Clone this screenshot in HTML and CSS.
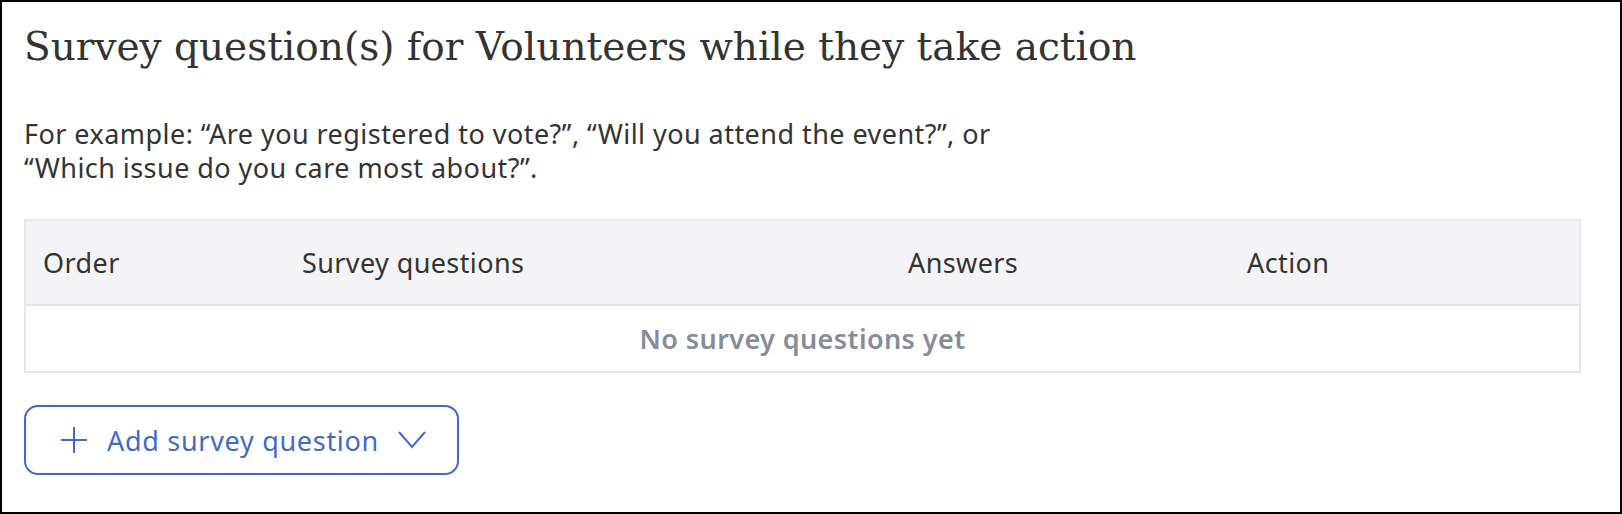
FILE: index.html
```html
<!DOCTYPE html>
<html lang="en">
<head>
<meta charset="utf-8">
<title>Survey questions</title>
<link rel="stylesheet" href="styles.css">
</head>
<body>
<section class="panel">
  <h2 class="title">Survey question(s) for Volunteers while they take action</h2>
  <p class="intro">For example: “Are you registered to vote?”, “Will you attend the event?”, or<br>“Which issue do you care most about?”.</p>
  <div class="table">
    <div class="row head">
      <div class="cell c-order">Order</div>
      <div class="cell c-question">Survey questions</div>
      <div class="cell c-answers">Answers</div>
      <div class="cell c-action">Action</div>
    </div>
    <div class="empty">No survey questions yet</div>
  </div>
  <button class="add-btn" type="button">
    <svg class="ico-plus" width="26" height="26" viewBox="0 0 26 26" aria-hidden="true"><path d="M13 0V26M0 13H26" stroke="currentColor" stroke-width="2" fill="none"/></svg>
    <span class="btn-label">Add survey question</span>
    <svg class="ico-chev" width="28" height="18" viewBox="0 0 28 18" aria-hidden="true"><path d="M1 1L14 16L27 1" stroke="currentColor" stroke-width="2" fill="none"/></svg>
  </button>
</section>
</body>
</html>
```

FILE: styles.css
```css
* { box-sizing: border-box; }
html, body { margin: 0; padding: 0; background: #fff; }
.panel {
  width: 1622px;
  height: 514px;
  border: 2px solid #000;
  padding: 0 39px 0 22px;
  font-family: "Noto Sans", "Open Sans", sans-serif;
  color: #333;
}
.title {
  margin: 0;
  padding-top: 21px;
  font-family: "DejaVu Serif", serif;
  font-weight: 400;
  font-size: 39px;
  line-height: 48px;
  color: #333;
}
.intro {
  margin: 46px 0 0;
  font-size: 27px;
  letter-spacing: 0.45px;
  line-height: 34px;
  color: #333;
}
.table {
  margin-top: 34px;
  border: 2px solid #e6e6eb;
}
.row {
  display: grid;
  grid-template-columns: 259px 606px 339px 1fr;
  align-items: center;
}
.head {
  height: 85px;
  background: #f4f4f6;
  border-bottom: 2px solid #e3e3e8;
}
.cell {
  padding-left: 17px;
  font-size: 27px;
  letter-spacing: 0.4px;
  color: #333;
}
.empty {
  height: 65px;
  display: flex;
  align-items: center;
  justify-content: center;
  font-size: 27px;
  letter-spacing: 0.4px;
  font-weight: 600;
  color: #868c99;
}
.add-btn {
  margin-top: 32px;
  display: flex;
  align-items: center;
  width: 435px;
  height: 70px;
  padding: 0 0 0 35px;
  border: 2px solid #3f6bc6;
  border-radius: 14px;
  background: #fff;
  color: #3f6bc6;
  font-family: "Noto Sans", "Open Sans", sans-serif;
  font-size: 27px;
  letter-spacing: 0.7px;
  cursor: pointer;
}
.ico-plus { flex: none; }
.btn-label { margin-left: 20px; }
.ico-chev { flex: none; margin-left: 19px; }
```
